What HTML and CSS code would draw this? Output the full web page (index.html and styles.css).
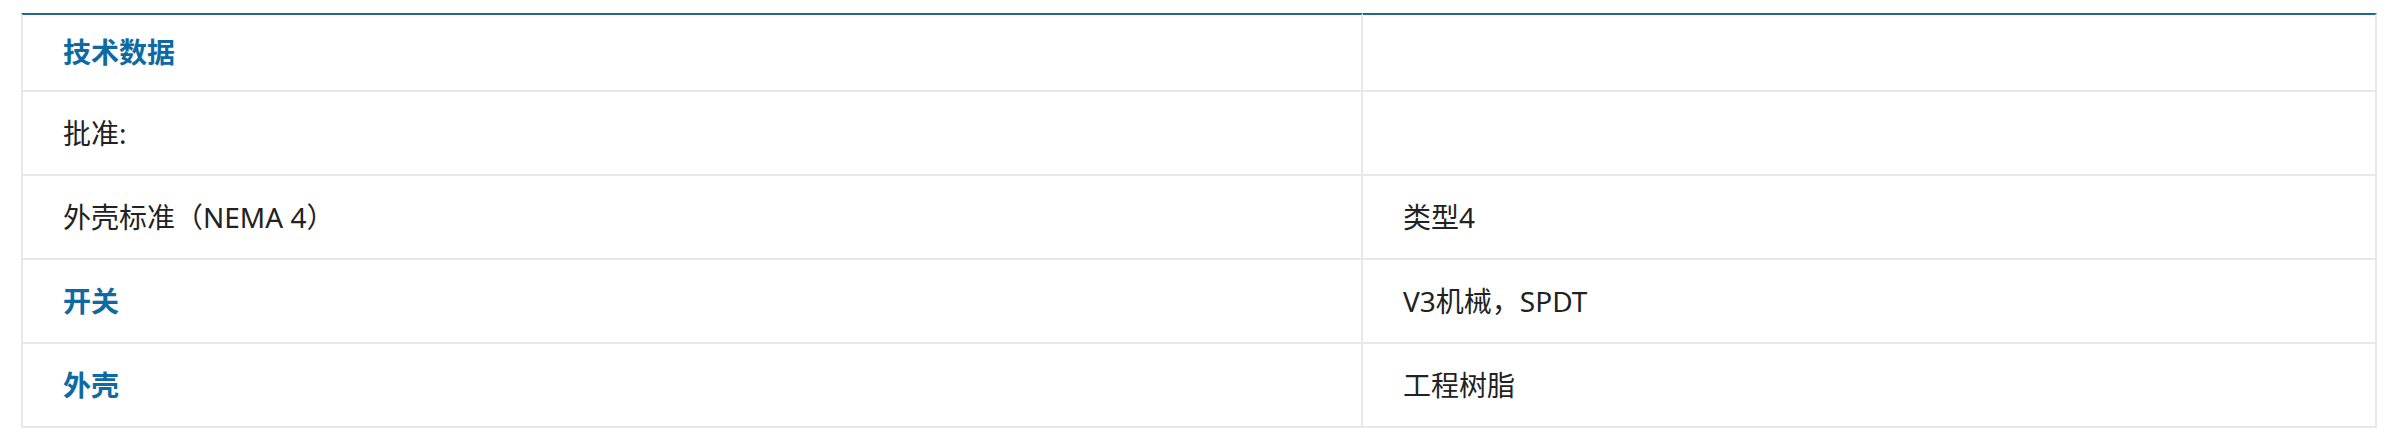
FILE: index.html
```html
<!DOCTYPE html>
<html lang="zh-CN">
<head>
<meta charset="utf-8">
<title>技术数据</title>
<link rel="stylesheet" href="styles.css">
</head>
<body>
<div class="wrap">
  <table class="spec">
    <colgroup>
      <col class="c1">
      <col class="c2">
    </colgroup>
    <thead>
      <tr>
        <th class="head">技术数据</th>
        <th class="head"></th>
      </tr>
    </thead>
    <tbody>
      <tr>
        <td>批准:</td>
        <td></td>
      </tr>
      <tr>
        <td>外壳标准（NEMA 4）</td>
        <td>类型4</td>
      </tr>
      <tr>
        <th class="label">开关</th>
        <td>V3机械，SPDT</td>
      </tr>
      <tr>
        <th class="label">外壳</th>
        <td>工程树脂</td>
      </tr>
    </tbody>
  </table>
</div>
</body>
</html>
```
FILE: styles.css
```css
html, body {
  margin: 0;
  padding: 0;
  background: #ffffff;
}

.wrap {
  padding: 13px 16px 0 21px;
}

.spec {
  width: 2356px;
  table-layout: fixed;
  border-collapse: separate;
  border-spacing: 0;
  font-family: "Noto Sans", "Noto Sans CJK SC", sans-serif;
  font-size: 28px;
  line-height: 40px;
  color: #222222;
}

.c1 { width: 1342px; }
.c2 { width: 1014px; }

.spec th,
.spec td {
  text-align: left;
  vertical-align: middle;
  padding: 21px 40px;
  border-right: 2px solid #e8e8e8;
  border-bottom: 2px solid #e8e8e8;
  font-weight: 400;
}

.spec tr > :first-child {
  border-left: 2px solid #e8e8e8;
}

.spec th.head {
  border-top: 2px solid #1f6a8c;
  padding: 17px 40px 18px;
  color: #0e6aa3;
  font-weight: 700;
}

.spec th.label {
  color: #0e6aa3;
  font-weight: 700;
}
```
